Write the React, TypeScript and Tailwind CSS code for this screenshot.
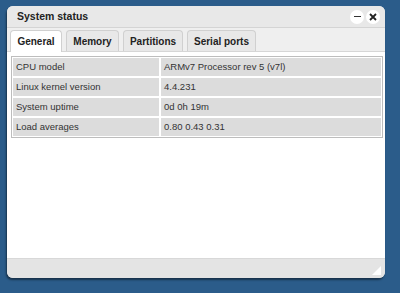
import React from 'react';

const rows = [
  ['CPU model', 'ARMv7 Processor rev 5 (v7l)'],
  ['Linux kernel version', '4.4.231'],
  ['System uptime', '0d 0h 19m'],
  ['Load averages', '0.80 0.43 0.31'],
];

const tabs = [
  { label: 'General', w: 'w-[52px]' },
  { label: 'Memory', w: 'w-[53px]' },
  { label: 'Partitions', w: 'w-[60px]' },
  { label: 'Serial ports', w: 'w-[69px]' },
];

export default function App() {
  return (
    <div
      className="w-[400px] h-[293px] bg-[#2b5c8a] pt-[6px] pl-[7px] overflow-hidden"
      style={{ fontFamily: '"Liberation Sans", Arial, sans-serif' }}
    >
      <div className="w-[378px] h-[272px] rounded-[6px] bg-[#e6e6e6] flex flex-col overflow-hidden shadow-[-1px_2px_2px_rgba(0,0,0,0.45)]">
        {/* title bar */}
        <div className="h-[22px] flex items-center justify-between pl-[10px] pr-[5px] border-b border-[#d4d4d4] bg-[#e8e8e8]">
          <span className="text-[10.5px] font-bold text-[#222]">System status</span>
          <div className="flex items-center gap-[2px]">
            <span className="w-[14px] h-[14px] rounded-full bg-white flex items-center justify-center">
              <span className="w-[7px] h-[1.5px] bg-[#333]" />
            </span>
            <span className="w-[14px] h-[14px] rounded-full bg-white flex items-center justify-center">
              <svg width="8" height="8" viewBox="0 0 8 8">
                <path d="M1 1L7 7M7 1L1 7" stroke="#222" strokeWidth="1.8" />
              </svg>
            </span>
          </div>
        </div>
        {/* tabs */}
        <div className="h-[24px] flex items-end gap-[4px] pl-[3px] bg-[#efefef] border-b border-[#d6d6d6]">
          {tabs.map((t, i) => (
            <div
              key={t.label}
              className={
                i === 0
                  ? `${t.w} h-[22px] flex items-center justify-center rounded-t-[4px] border border-b-0 border-[#d0d0d0] bg-white text-[10px] font-bold text-[#222] -mb-px`
                  : `${t.w} h-[21px] flex items-center justify-center rounded-t-[4px] border border-b-0 border-[#d0d0d0] bg-[#e8e8e8] text-[10px] font-bold text-[#222]`
              }
            >
              {t.label}
            </div>
          ))}
        </div>
        {/* content */}
        <div className="flex-1 bg-white pt-[4px] pl-[4px] pr-[2px]">
          <div className="border border-[#bdbdbd] p-px flex flex-col gap-[2px] bg-white">
            {rows.map(([k, v]) => (
              <div key={k} className="flex gap-[2px] h-[18px] text-[9.5px] text-[#333]">
                <div className="w-[146px] bg-[#dcdcdc] flex items-center pl-[3px]">{k}</div>
                <div className="flex-1 bg-[#dcdcdc] flex items-center pl-[3px]">{v}</div>
              </div>
            ))}
          </div>
        </div>
        {/* footer */}
        <div className="h-[20px] bg-[#e4e4e4] border-t border-[#d8d8d8] relative">
          <svg className="absolute right-[4px] bottom-[3px]" width="9" height="9" viewBox="0 0 9 9">
            <path d="M9 0L9 9L0 9Z" fill="#ffffff" />
          </svg>
        </div>
      </div>
    </div>
  );
}
